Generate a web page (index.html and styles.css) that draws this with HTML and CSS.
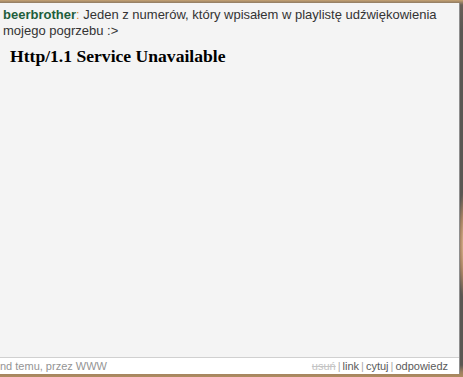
FILE: index.html
```html
<!DOCTYPE html>
<html lang="pl">
<head>
<meta charset="utf-8">
<link rel="stylesheet" href="styles.css">
</head>
<body>
<div class="frame">
  <div class="panel">
    <p class="comment"><b class="author">beerbrother</b><span class="colon">:</span> Jeden z numerów, który wpisałem w playlistę udźwiękowienia mojego pogrzebu :&gt;</p>
    <h1 class="error">Http/1.1 Service Unavailable</h1>
  </div>
  <div class="footer">
    <span class="meta">nd temu, przez WWW</span>
    <span class="actions"><span class="del">usuń</span><span class="sep">|</span><span class="act">link</span><span class="sep">|</span><span class="act">cytuj</span><span class="sep">|</span><span class="act">odpowiedz</span></span>
  </div>
</div>
</body>
</html>
```
FILE: styles.css
```css
html {
  margin: 0;
  padding: 0;
  height: 377px;
  background-color: #5a5652;
  background-image:
    radial-gradient(ellipse 8px 55px at 465px 245px, #f2c9a0 0%, rgba(220,160,110,0.6) 60%, rgba(90,86,82,0) 100%),
    linear-gradient(180deg, #c6a272 0px, #6a6058 5px, #5a5652 30px, #5a5652 365px, #9c8060 372px, #b08c60 377px);
  background-repeat: no-repeat;
}
body {
  margin: 0;
  padding: 0;
  width: 463px;
  height: 377px;
  overflow: hidden;
  font-family: "Liberation Sans", Arial, sans-serif;
}
.frame {
  margin-top: 3px;
  width: 459px;
  height: 371px;
  display: flex;
  flex-direction: column;
  border-right: 1px solid #8e8e8e;
}
.panel {
  flex: 1;
  background: #f4f4f4;
  padding: 4px 0 0 3px;
}
.comment {
  margin: 0;
  font-size: 13px;
  line-height: 16px;
  color: #333;
  padding-right: 10px;
}
.author {
  color: #1e5e3c;
}
.colon {
  color: #e08a2a;
}
.error {
  margin: 7px 0 0 7px;
  font-family: "Liberation Serif", "Times New Roman", serif;
  font-size: 17.6px;
  line-height: 20px;
  font-weight: bold;
  color: #000;
}
.footer {
  height: 16px;
  background: #fff;
  border-top: 1px solid #d0d0d0;
  display: flex;
  justify-content: space-between;
  align-items: center;
  font-size: 11px;
  padding-right: 11px;
}
.meta {
  color: #949494;
}
.actions {
  color: #5a5a5a;
}
.del {
  color: #c4c4c4;
  text-decoration: line-through;
}
.sep {
  color: #aaa;
  margin: 0 2px;
}
```
